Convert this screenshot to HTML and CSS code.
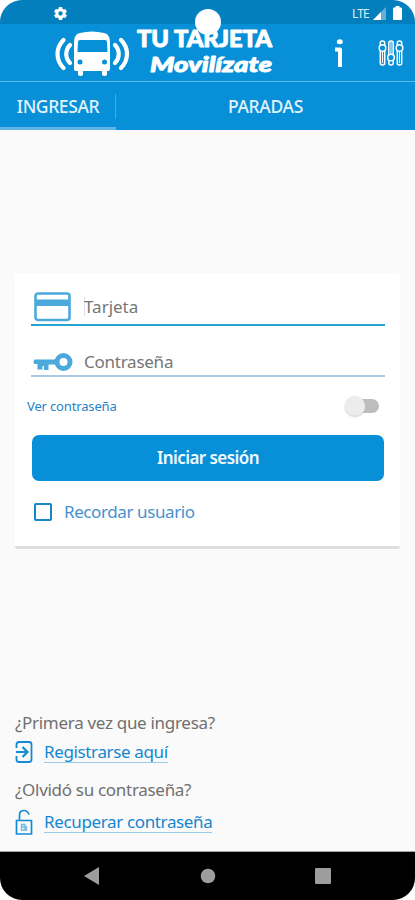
FILE: index.html
```html
<!DOCTYPE html>
<html lang="es">
<head>
<meta charset="utf-8">
<title>Tu Tarjeta Movilízate</title>
<link rel="stylesheet" href="styles.css">
</head>
<body>
<div class="phone">
  <div class="status">
    <svg class="gear" width="13" height="13" viewBox="0 0 24 24"><path fill="#fff" fill-rule="evenodd" d="M9 0h6l.7 3.400 2 1.200 3.200-1.100 3 5.100-2.600 2.200v2.400l2.600 2.200-3 5.100-3.200-1.100-2 1.200L15 24H9l-.7-3.400-2-1.200-3.200 1.100-3-5.100 2.600-2.200v-2.400L.1 8.600l3-5.100 3.200 1.100 2-1.200zM12 8a4 4 0 1 0 0 8 4 4 0 0 0 0-8z"/></svg>
    <span class="lte">LTE</span>
    <svg class="signal" width="13" height="13" viewBox="0 0 13 13"><path fill="#65b0d9" d="M0 13 13 0v13z"/><path fill="#fff" d="M0 13 8 5v8z"/></svg>
    <svg class="battery" width="9" height="14" viewBox="0 0 9 14"><path fill="#fff" d="M2.500 0h4v1.500H8q1 0 1 1V13q0 1-1 1H1q-1 0-1-1V2.500q0-1 1-1h1.500z"/></svg>
  </div>
  <header class="header">
    <svg class="bus" width="76" height="46" viewBox="0 0 76 46">
      <g fill="none" stroke="#fff" stroke-width="4.200" stroke-linecap="round">
        <path d="M8.500 10C.5 18 .5 30 8.500 38M15 15c-5 5-5 13 0 18M66 10c8 8 8 20 0 28M60 15c5 5 5 13 0 18"/>
      </g>
      <path fill="#fff" fill-rule="evenodd" d="M19 14c0-8 2-10 6-11 8-2 16-2 24 0 4 1 6 3 6 11v25q0 2-2 2h-1v3q0 2-2 2h-1q-2 0-2-2v-3H28v3q0 2-2 2h-1q-2 0-2-2v-3h-2q-2 0-2-2zM25 10q-2 0-2 2l-.5 10h30L52 12q0-2-2-2zM25 29.500a2.500 2.500 0 1 0 0 5 2.500 2.500 0 0 0 0-5zM49.500 29.500a2.500 2.500 0 1 0 0 5 2.500 2.500 0 0 0 0-5z"/>
    </svg>
    <svg class="brand" width="144" height="50" viewBox="0 0 144 50">
      <text class="brand-top" x="4" y="20" textLength="135" lengthAdjust="spacingAndGlyphs">TU TARJETA</text>
      <text class="brand-bottom" x="17" y="44.500" textLength="122" lengthAdjust="spacingAndGlyphs">Movilízate</text>
    </svg>
    <svg class="info" width="9" height="28" viewBox="0 0 9 28"><ellipse cx="4.800" cy="2.700" rx="3" ry="2.500" fill="#fff"/><path fill="none" stroke="#fff" stroke-width="4" stroke-linejoin="round" d="M0 10.500h5V28"/></svg>
    <svg class="sliders" width="26" height="26" viewBox="0 0 26 26">
      <g fill="#0790d8" stroke="#fff" stroke-width="1.500">
        <rect x="2.300" y="1" width="4.400" height="24" rx="2"/><rect x="10.800" y="1" width="4.400" height="24" rx="2"/><rect x="19.300" y="1" width="4.400" height="24" rx="2"/>
        <path fill="none" stroke-width="1" d="M4.500 11v12M13 2v12M21.500 11v12"/>
        <circle cx="4.500" cy="8" r="3.300"/><circle cx="13" cy="17.500" r="3.300"/><circle cx="21.500" cy="8" r="3.300"/>
      </g>
    </svg>
  </header>
  <nav class="tabs">
    <div class="tab active"><span class="t-ingresar">INGRESAR</span></div>
    <div class="tab"><span class="t-paradas">PARADAS</span></div>
  </nav>
  <main class="content">
    <section class="card">
      <div class="field focused">
        <svg width="38" height="30" viewBox="0 0 38 30"><rect x="1.500" y="1.500" width="34" height="26.500" rx="2.500" fill="none" stroke="#4ba9dc" stroke-width="2.600"/><path fill="#4ba9dc" d="M2 7.500h33v6.500H2z"/></svg>
        <span class="caret"></span><span class="t-tarjeta">Tarjeta</span>
      </div>
      <div class="field second">
        <svg class="key" width="41" height="20" viewBox="0 0 41 20"><circle cx="31.500" cy="10" r="6.500" fill="none" stroke="#4ba9dc" stroke-width="5"/><path fill="#4ba9dc" d="M2.500 7.500H24v5h-7.500V18H12v-4h-1.500v3.500H5.500V12h-3q-2-2.200 0-4.500z"/></svg>
        <span class="t-contrasena">Contraseña</span>
      </div>
      <div class="reveal"><span class="t-ver">Ver contraseña</span><span class="switch"></span></div>
      <button class="login"><span>Iniciar sesión</span></button>
      <label class="remember"><span class="box"></span><span class="t-recordar">Recordar usuario</span></label>
    </section>
    <section class="links">
      <p class="t-primera">¿Primera vez que ingresa?</p>
      <a class="link">
        <svg width="18" height="22" viewBox="0 0 18 22"><path fill="none" stroke="#158bd3" stroke-width="1.800" d="M1.500 7V3.500q0-2.500 2.500-2.500h10q2.500 0 2.500 2.500v15q0 2.500-2.500 2.500H4q-2.500 0-2.500-2.500V15"/><path fill="none" stroke="#158bd3" stroke-width="2.200" d="M1 11h11.500M7.500 6l5 5-5 5"/></svg>
        <span class="t-registrar">Registrarse aquí</span>
      </a>
      <p class="t-olvido">¿Olvidó su contraseña?</p>
      <a class="link">
        <svg width="18" height="26" viewBox="0 0 18 26"><path fill="none" stroke="#158bd3" stroke-width="1.700" d="M1.500 11.500h15V25h-15zM4.500 11.500V6q0-4.500 4.500-4.500 3.500 0 5 4"/><path fill="none" stroke="#72b7e3" stroke-width="1.300" d="M6.500 15.500H10V21H6.500zM6.500 18h5v3H10"/></svg>
        <span class="t-recuperar">Recuperar contraseña</span>
      </a>
    </section>
  </main>
  <footer class="navbar">
    <svg width="16" height="18" viewBox="0 0 16 18"><path fill="#9d9d9d" d="M15 0v18L0 9z"/></svg>
    <svg width="16" height="16" viewBox="0 0 16 16"><circle cx="8" cy="8" r="7.300" fill="#9d9d9d"/></svg>
    <svg width="16" height="16" viewBox="0 0 16 16"><rect width="16" height="16" rx="1" fill="#9d9d9d"/></svg>
  </footer>
  <div class="camera"></div>
</div>
</body>
</html>
```
FILE: styles.css
```css
* { box-sizing: border-box; }
body { margin: 0; background: #fff; font-family: "Noto Sans", sans-serif; font-size: 17px; }
svg { display: block; flex: none; }
span, p { white-space: nowrap; }
.phone { position: relative; width: 415px; height: 900px; display: flex; flex-direction: column; overflow: hidden; border-radius: 22px; background: #fafafa; }
.status { height: 24px; flex: none; display: flex; align-items: center; background: #047fbd; color: #d9edf7; padding: 2px 13px 0 54px; }
.lte { margin-left: auto; font-size: 12px; letter-spacing: -.8px; }
.signal { margin-left: 4px; }
.battery { margin-left: 7px; }
.header { height: 58px; flex: none; display: flex; background: #0790d8; border-bottom: 1px solid #60b8e7; padding-left: 55px; }
.bus { margin-top: 6px; }
.brand { margin: 3px 0 0 2px; }
.brand text { font-family: Lato, "Noto Sans", sans-serif; fill: #fff; stroke: #fff; stroke-width: .9px; stroke-linejoin: round; font-weight: 900; }
.brand-top { font-size: 22px; }
.brand .brand-bottom { font-size: 21.5px; font-style: italic; }
.info { margin: 15px 0 0 58px; }
.sliders { margin: 16px 0 0 34px; }
.tabs { height: 48px; flex: none; display: flex; background: #0790d8; color: #e3f3fc; font-size: 17.5px; font-weight: 500; }
.tab { flex: 1; display: flex; align-items: center; justify-content: center; }
.tab.active { flex: none; width: 116px; border-bottom: 3px solid #5eb5e5; background: linear-gradient(#49aadd, #49aadd) right 12px / 1px 25px no-repeat; padding-top: 3px; }
.t-ingresar { letter-spacing: -.4px; }
.t-paradas { letter-spacing: -.3px; }
.content { flex: 1; display: flex; flex-direction: column; justify-content: space-between; padding: 143px 15px 13px; border-bottom: 1px solid #a5a5a5; }
.card { height: 276px; background: #fff; border-bottom: 3px solid #dedede; border-radius: 3px; padding: 0 15px 0 16px; }
.field { display: flex; align-items: center; color: #767676; }
.focused { height: 53px; padding: 16px 0 0 3px; border-bottom: 2px solid #27a3d0; }
.caret { width: 1px; height: 19px; margin-left: 12px; background: #dce1ec; }
.t-tarjeta { margin-left: -1px; }
.second { height: 51px; padding: 22px 0 0 1px; border-bottom: 2px solid #a9c8e4; }
.t-contrasena { margin-left: 11px; letter-spacing: -.25px; }
.reveal { height: 58px; display: flex; align-items: center; justify-content: space-between; margin-left: -4px; padding-right: 6px; font-size: 13px; color: #2484cc; }
.t-ver { letter-spacing: -.15px; margin-top: -1px; }
.switch { position: relative; width: 30px; height: 14px; border-radius: 7px; background: #bdbdbd; }
.switch::before { content: ""; position: absolute; left: -4px; top: -3px; width: 20px; height: 20px; border-radius: 50%; background: #ececec; box-shadow: 0 1px 2px #ccc; }
.login { display: flex; align-items: center; justify-content: center; width: 352px; height: 46px; margin-left: 1px; border: 0; border-radius: 7px; background: #0790d8; color: #f2faff; font: 600 17px "Noto Sans", sans-serif; letter-spacing: -.55px; }
.login span { margin-top: -1px; }
.remember { display: flex; align-items: center; height: 62px; padding-left: 3px; color: #4591cf; }
.box { width: 18px; height: 18px; border: 2px solid #1689c5; border-radius: 2px; margin-right: 12px; }
.t-recordar { letter-spacing: -.4px; margin-top: -1px; }
.links { color: #707070; }
.links p { margin: 0; height: 26px; line-height: 26px; letter-spacing: -.3px; }
.link { display: flex; align-items: center; height: 32px; margin-bottom: 9px; gap: 11px; color: #1586cf; }
.link:last-child { margin: 3px 0 0; }
.link span { line-height: 21px; border-bottom: 1px solid #9bc9e9; letter-spacing: -.36px; }
.navbar { height: 48px; flex: none; display: flex; align-items: center; justify-content: space-between; background: #000; padding: 0 84px; }
.camera { position: absolute; left: 195px; top: 9px; width: 26px; height: 26px; border-radius: 50%; background: #fff; }
```
